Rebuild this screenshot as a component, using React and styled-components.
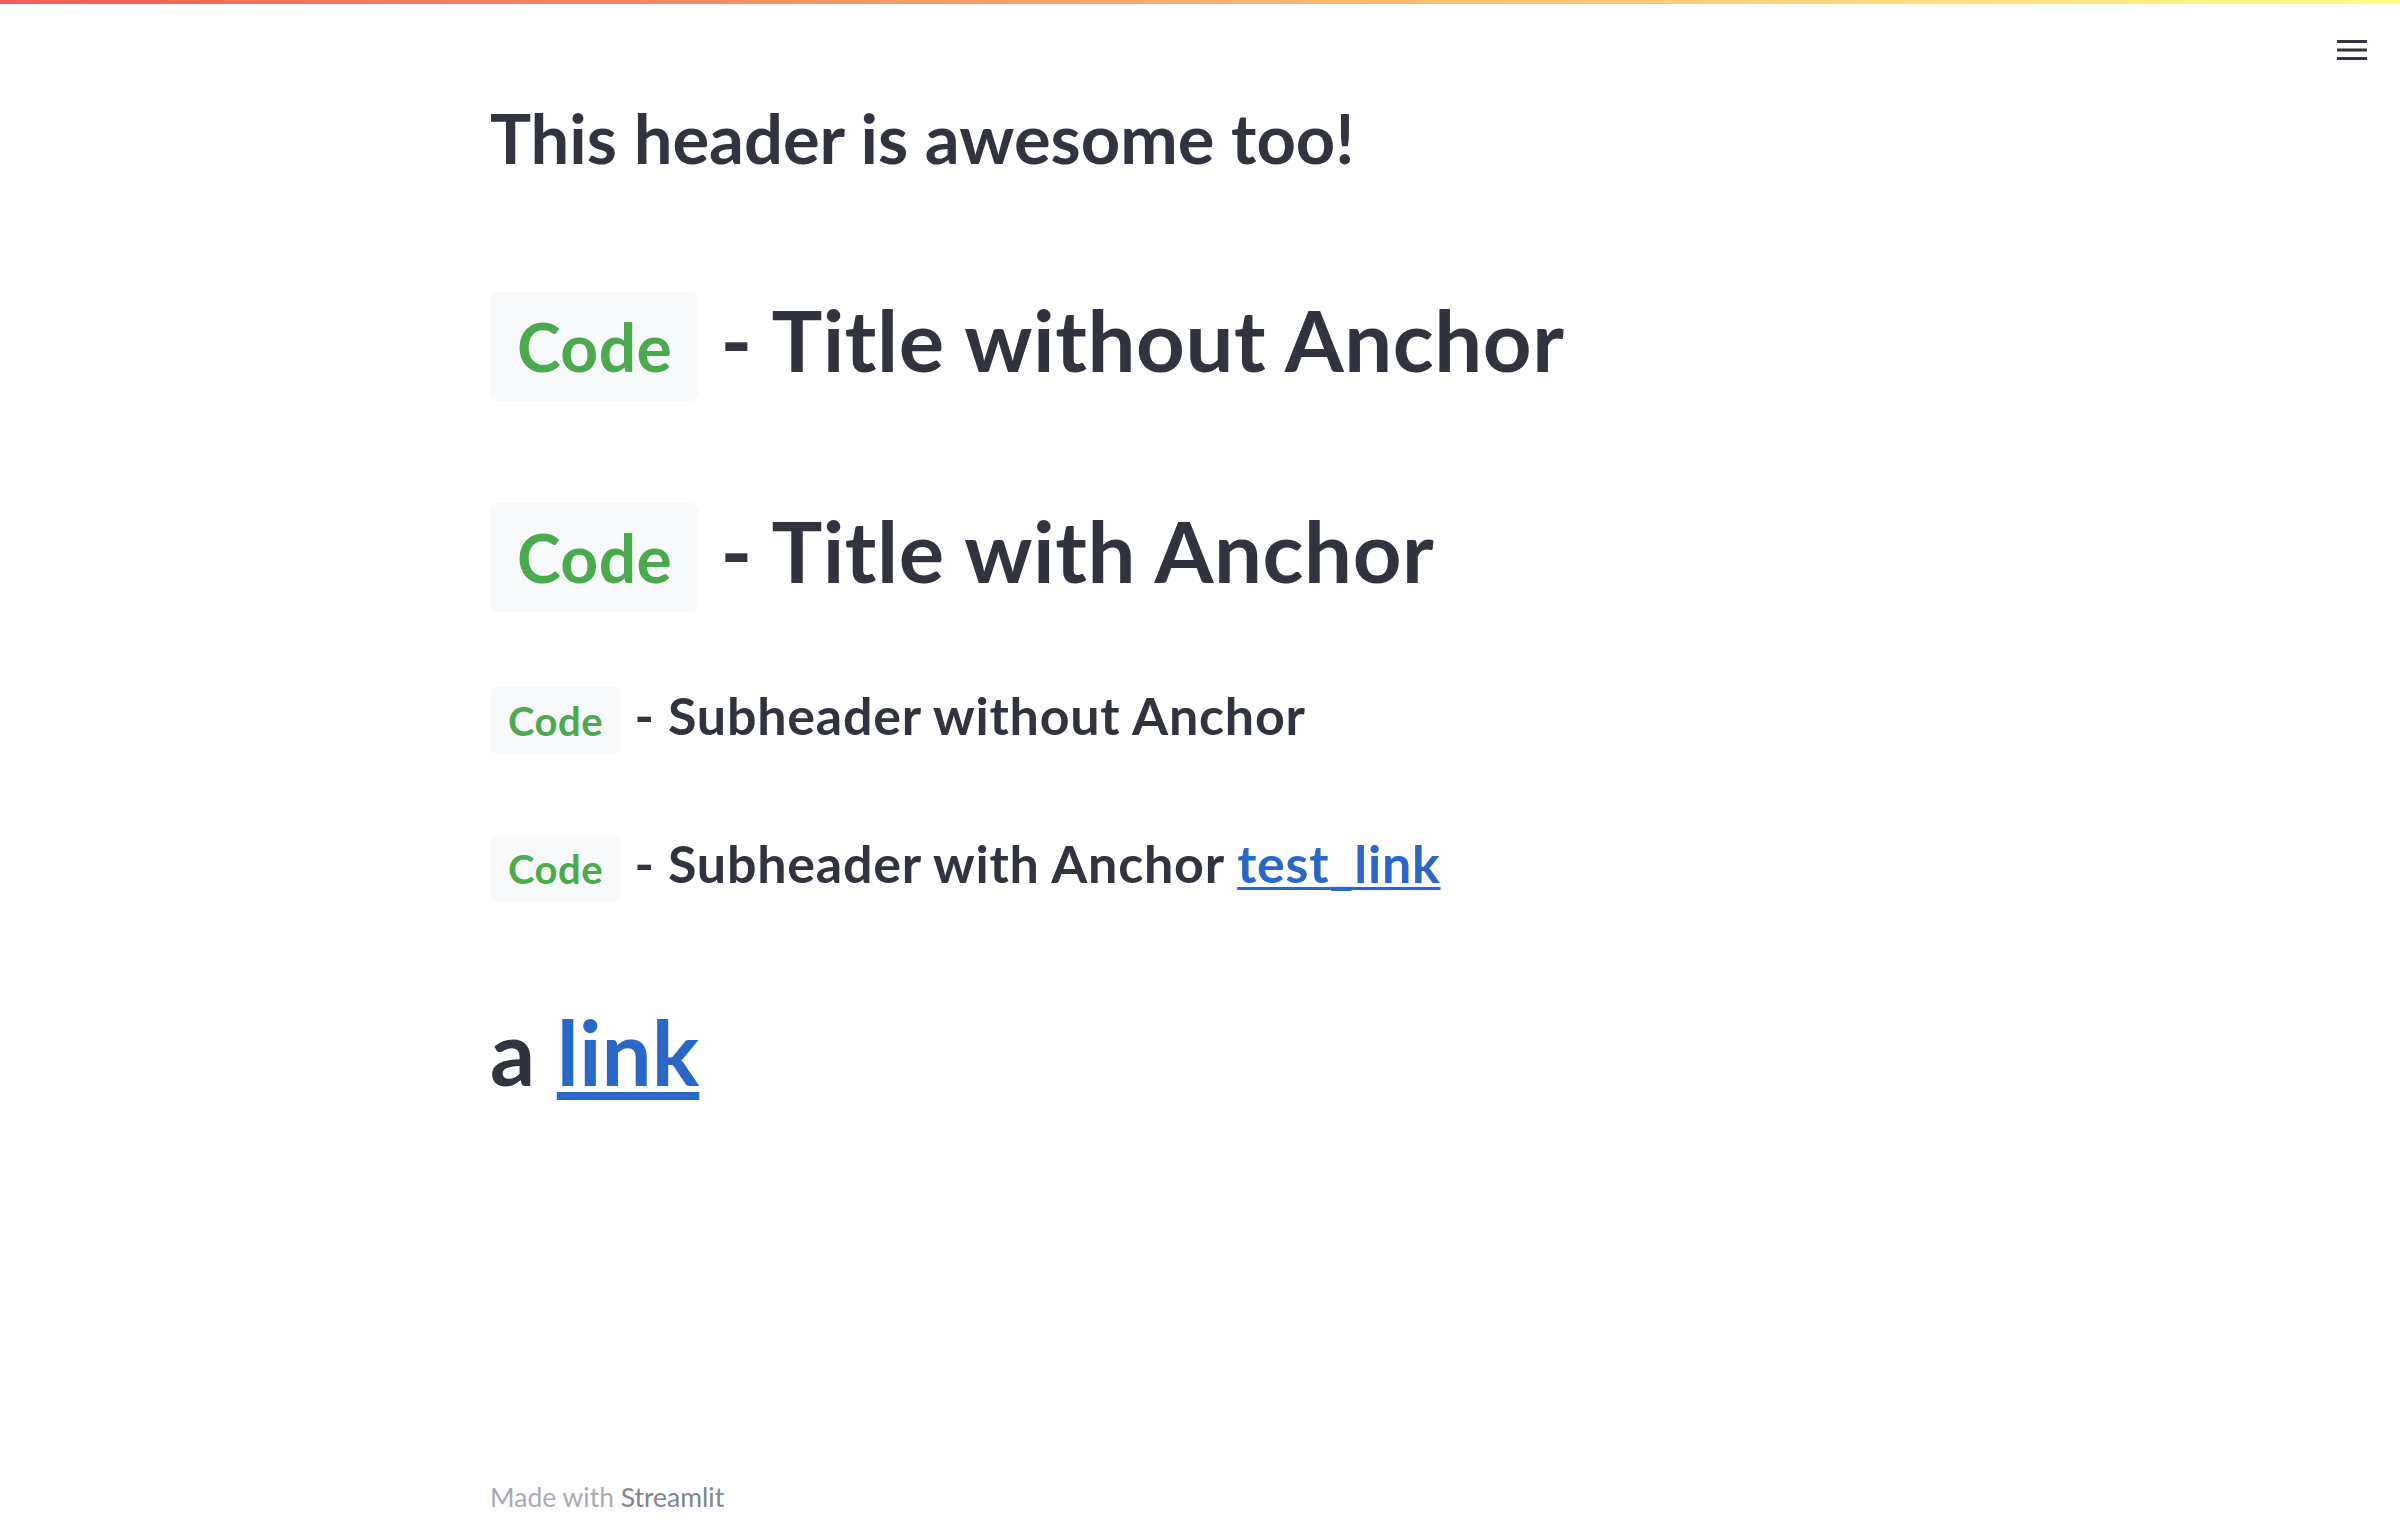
import React from "react";
import styled, { createGlobalStyle } from "styled-components";

const Global = createGlobalStyle`
  html, body { margin: 0; padding: 0; background: #ffffff; }
  body { font-family: Lato, "Noto Sans", sans-serif; color: #31333f; }
`;

const Page = styled.div`
  width: 2400px;
  min-height: 1536px;
  display: flex;
  flex-direction: column;
`;

const Decoration = styled.div`
  height: 4px;
  background: linear-gradient(90deg, rgb(240, 94, 88), rgb(255, 253, 140));
`;

const HeaderBar = styled.header`
  height: 92px;
  box-sizing: border-box;
  padding: 36px 33px 0 0;
  display: flex;
  justify-content: flex-end;
  align-items: flex-start;
`;

const MenuButton = styled.button`
  border: 0;
  background: none;
  padding: 0;
  width: 30px;
  height: 21px;
  display: flex;
  cursor: pointer;
`;

const Main = styled.main`
  width: 1420px;
  margin: 0 auto;
  display: flex;
  flex-direction: column;
`;

const Heading = styled.div`
  margin: ${(p) => p.$mt}px 0 0 0;
  font-size: ${(p) => p.$size}px;
  line-height: ${(p) => p.$lh}px;
  font-weight: ${(p) => p.$weight};
  letter-spacing: ${(p) => p.$ls || 0}px;
  color: #31333f;
  white-space: nowrap;
`;

const Code = styled.span`
  font-size: ${(p) => p.$size}px;
  font-weight: ${(p) => p.$weight};
  letter-spacing: ${(p) => p.$ls || 0}px;
  color: #4baa4e;
  background: #f8f9fb;
  border-radius: ${(p) => p.$radius}px;
  padding: ${(p) => p.$py}px ${(p) => p.$px}px;
`;

const Link = styled.a`
  color: #2b67c6;
  text-decoration: underline;
  text-decoration-thickness: ${(p) => p.$thick}px;
  text-underline-offset: ${(p) => p.$offset}px;
`;

const Footer = styled.footer`
  width: 1420px;
  margin: ${(p) => p.$mt}px auto 0;
  font-size: 26.5px;
  line-height: 30px;
  color: #a9abb3;
`;

const FooterBrand = styled.span`
  color: #82848f;
`;

function MenuIcon() {
  return (
    <svg width="30" height="21" viewBox="0 0 30 21" fill="#31333f">
      <rect x="0" y="0" width="30" height="3" />
      <rect x="0" y="8.5" width="30" height="3" />
      <rect x="0" y="17" width="30" height="3" />
    </svg>
  );
}

export default function App() {
  return (
    <>
      <Global />
      <Page>
        <Decoration />
        <HeaderBar>
          <MenuButton aria-label="menu">
            <MenuIcon />
          </MenuButton>
        </HeaderBar>
        <Main>
          <Heading $mt={0} $size={68.7} $lh={84} $weight={700}>
            This header is awesome too!
          </Heading>
          <Heading $mt={104} $size={85} $lh={110} $weight={700} $ls={0.6}>
            <Code $size={66} $weight={700} $ls={0.4} $py={15} $px={27} $radius={8}>
              Code
            </Code>{" "}
            - Title without Anchor
          </Heading>
          <Heading $mt={93} $size={85} $lh={110} $weight={700} $ls={0.6}>
            <Code $size={66} $weight={700} $ls={0.4} $py={15} $px={27} $radius={8}>
              Code
            </Code>{" "}
            - Title with Anchor
          </Heading>
          <Heading $mt={67} $size={52} $lh={70} $weight={700} $ls={0.75}>
            <Code $size={40} $weight={700} $ls={0.5} $py={9.5} $px={18} $radius={7}>
              Code
            </Code>{" "}
            - Subheader without Anchor
          </Heading>
          <Heading $mt={73} $size={52} $lh={70} $weight={700} $ls={0.75}>
            <Code $size={40} $weight={700} $ls={0.5} $py={9.5} $px={18} $radius={7}>
              Code
            </Code>{" "}
            - Subheader with Anchor{" "}
            <Link href="#" $thick={3} $offset={4}>
              test_link
            </Link>
          </Heading>
          <Heading $mt={94} $size={89} $lh={110} $weight={700}>
            a{" "}
            <Link href="#" $thick={8} $offset={6}>
              link
            </Link>
          </Heading>
        </Main>
        <Footer $mt={375}>
          Made with <FooterBrand>Streamlit</FooterBrand>
        </Footer>
      </Page>
    </>
  );
}
